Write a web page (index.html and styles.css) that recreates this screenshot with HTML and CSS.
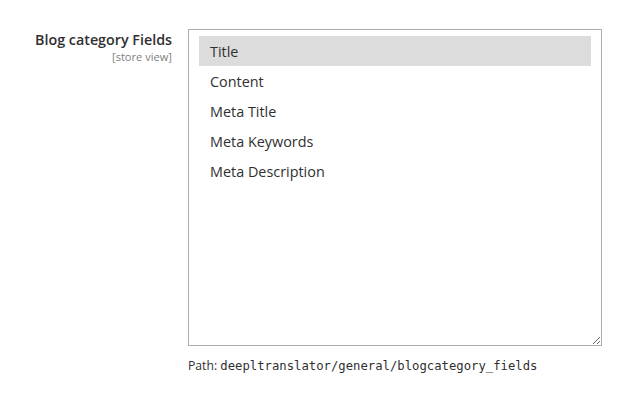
FILE: index.html
```html
<!DOCTYPE html>
<html lang="en">
<head>
    <meta charset="UTF-8">
    <title>Blog category Fields</title>
    <link rel="stylesheet" href="styles.css">
</head>
<body>
    <div class="field-row">
        <div class="field-label">
            <label>Blog category Fields</label>
            <span class="scope">[store view]</span>
        </div>
        <div class="field-control">
            <div class="multiselect">
                <div class="option selected">Title</div>
                <div class="option">Content</div>
                <div class="option">Meta Title</div>
                <div class="option">Meta Keywords</div>
                <div class="option">Meta Description</div>
            </div>
            <p class="note">Path: <code>deepltranslator/general/blogcategory_fields</code></p>
        </div>
    </div>
</body>
</html>
```

FILE: styles.css
```css
* {
    box-sizing: border-box;
}

body {
    margin: 0;
    font-family: 'Open Sans', 'Liberation Sans', sans-serif;
    color: #303030;
    background: #fff;
}

.field-row {
    display: flex;
    padding: 29px 0 0 0;
}

.field-label {
    width: 172px;
    display: flex;
    flex-direction: column;
    align-items: flex-end;
    padding-top: 1px;
}

.field-label label {
    font-size: 14.3px;
    font-weight: 600;
    line-height: 20px;
    color: #303030;
}

.scope {
    font-size: 11.1px;
    line-height: 13px;
    color: #808080;
}

.field-control {
    margin-left: 16px;
}

.multiselect {
    width: 414px;
    height: 317px;
    border: 1px solid #adadad;
    padding: 6px 10px;
    overflow: auto;
    resize: vertical;
}

.option {
    height: 30px;
    line-height: 30px;
    padding: 1px 0 0 11px;
    font-size: 14.4px;
    color: #303030;
}

.option.selected {
    background: #dcdcdc;
}

.note {
    margin: 12px 0 0 0;
    font-size: 12.2px;
    line-height: 16px;
    color: #303030;
}

.note code {
    font-family: 'DejaVu Sans Mono', monospace;
    font-size: 12.25px;
}
```
